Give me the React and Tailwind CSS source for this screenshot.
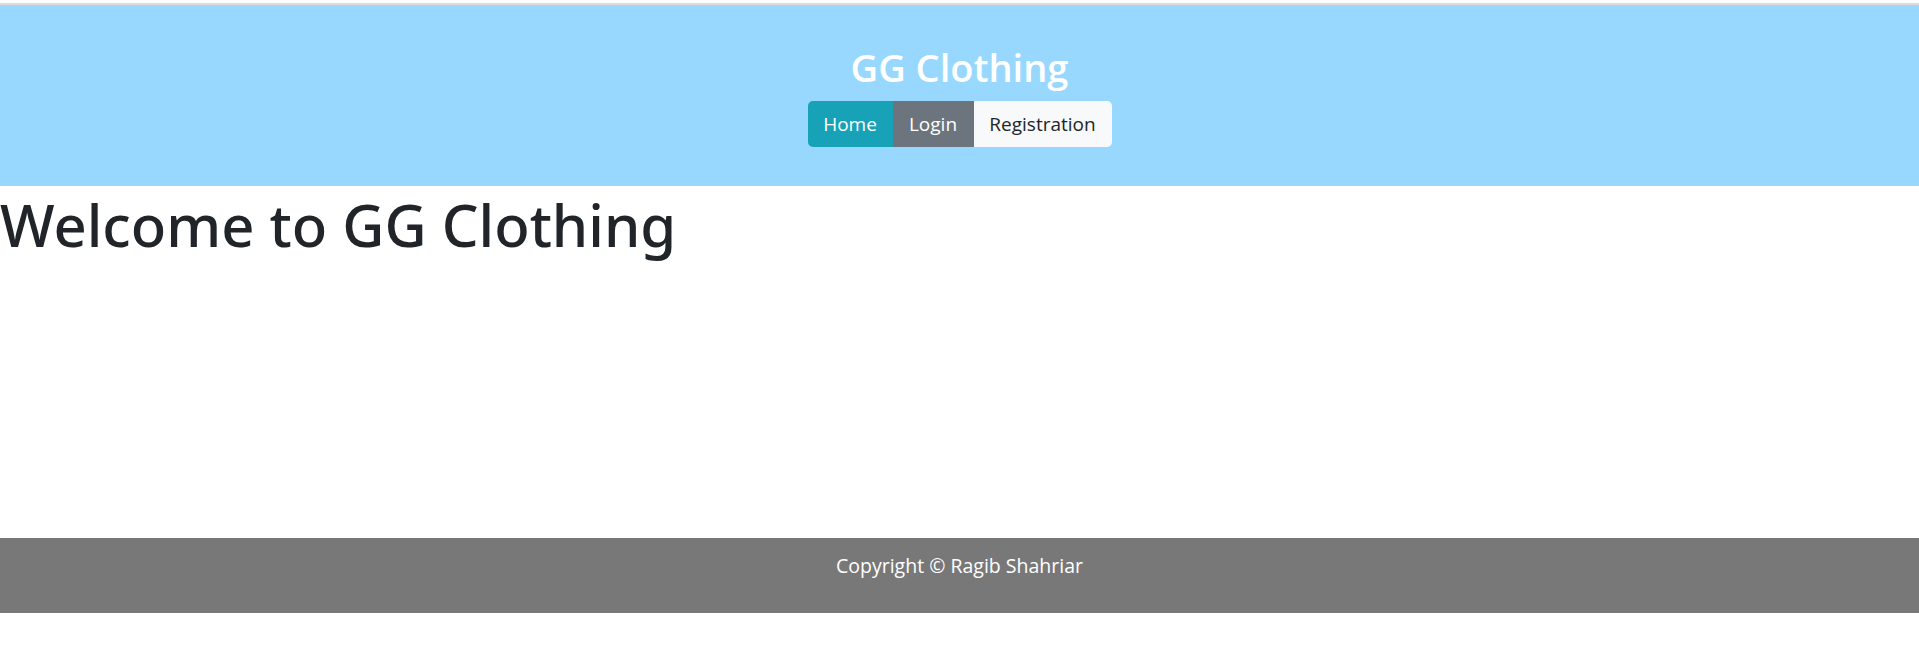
export default function App() {
  return (
    <div className="min-h-[648px] bg-white" style={{ fontFamily: '"Open Sans", "Noto Sans", sans-serif' }}>
      <div className="h-[3px] bg-white" />
      <div className="h-[2px] bg-[#dcdcdc]" />
      <header className="h-[181px] bg-[#99d8fe] flex flex-col items-center pt-[41px]">
        <h2 className="text-[38px] leading-[42px] font-semibold text-white">GG Clothing</h2>
        <nav className="mt-[13px] flex rounded-[5px] overflow-hidden">
          <button className="h-[46px] w-[85px] bg-[#17a2b8] text-white text-[19px]">Home</button>
          <button className="h-[46px] w-[81px] bg-[#6c757d] text-white text-[19px]">Login</button>
          <button className="h-[46px] w-[138px] bg-[#f8f9fa] text-[#212529] text-[19px]">Registration</button>
        </nav>
      </header>

      <main className="h-[352px] pt-[3px]">
        <h1 className="font-['Noto_Sans',sans-serif] text-[58px] leading-[72px] text-[#212529] font-medium">Welcome to GG Clothing</h1>
      </main>

      <footer className="h-[75px] bg-[#787878] flex justify-center pt-[15px]">
        <p className="text-[19.5px] leading-[26px] text-white">Copyright © Ragib Shahriar</p>
      </footer>
    </div>
  )
}
